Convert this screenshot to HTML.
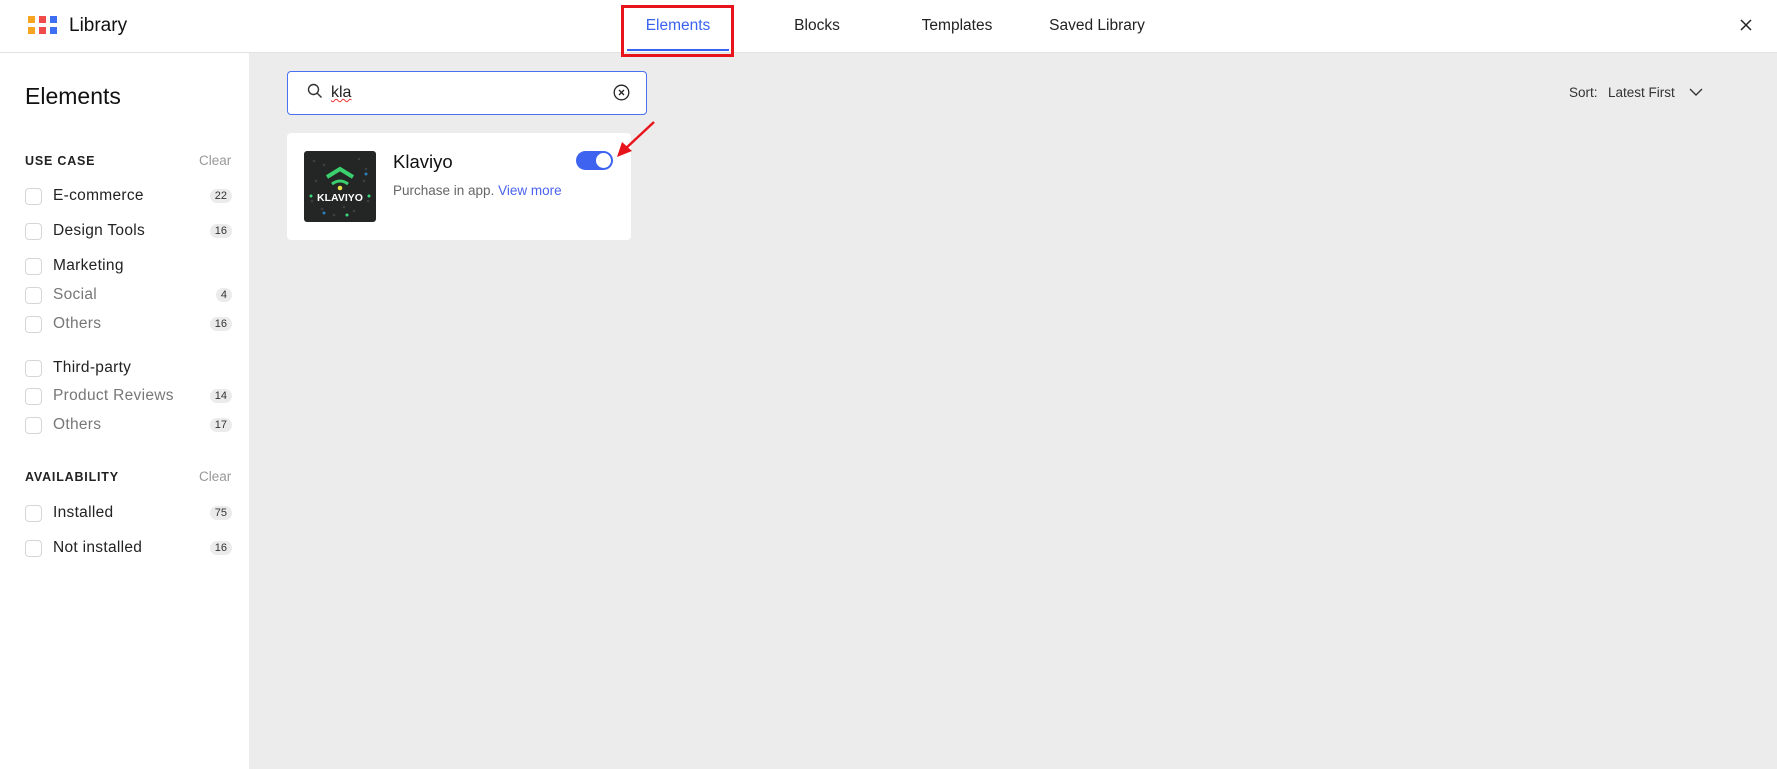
<!DOCTYPE html>
<html><head><meta charset="utf-8"><style>
*{box-sizing:border-box;margin:0;padding:0}
body{width:1777px;height:769px;overflow:hidden;background:#ececec;font-family:"Liberation Sans",sans-serif;position:relative;color:#1c1c1c}
.a{position:absolute;white-space:nowrap}
#hdr{position:absolute;left:0;top:0;width:1777px;height:53px;background:#fff;border-bottom:1px solid #e2e2e2}
#side{position:absolute;left:0;top:53px;width:249px;height:716px;background:#fff}
.tab{font-size:15.5px;color:#222;transform:translateX(-50%);top:17px}
.cb{position:absolute;left:25px;width:17px;height:17px;border:1px solid #d6d6d6;border-radius:4px;background:#fff}
.lbl{left:53px;font-size:15.5px;color:#222;letter-spacing:.3px}
.lbl.g{color:#777}
.bd{right:1545px;font-size:11px;background:#ebebeb;border-radius:7px;padding:1px 5px;color:#333}
.hd{left:25px;font-size:12.5px;font-weight:bold;letter-spacing:.8px;color:#222}
.clr{left:199px;font-size:13.5px;color:#999}
</style></head><body>
<div id="hdr"></div>
<div id="side"></div>
<svg class="a" style="left:28px;top:16px" width="30" height="20" viewBox="0 0 30 20">
<rect x="0" y="0" width="7" height="7" fill="#f7a520"/><rect x="11" y="0" width="7" height="7" fill="#ef4b4b"/><rect x="22" y="0" width="7" height="7" fill="#3e6ff2"/>
<rect x="0" y="11" width="7" height="7" fill="#f7a520"/><rect x="11" y="11" width="7" height="7" fill="#ef4b4b"/><rect x="22" y="11" width="7" height="7" fill="#3e6ff2"/></svg>
<div class="a" style="left:69px;top:15px;font-size:19px;color:#111">Library</div>
<div class="a tab" style="left:678px;color:#3a62f0">Elements</div>
<div class="a" style="left:627px;top:49px;width:102px;height:2px;background:#3a62f0"></div>
<div class="a" style="left:621px;top:5px;width:113px;height:52px;border:3px solid #e8141c"></div>
<div class="a tab" style="left:817px">Blocks</div>
<div class="a tab" style="left:957px">Templates</div>
<div class="a tab" style="left:1097px">Saved Library</div>
<svg class="a" style="left:1740px;top:19px" width="12" height="12" viewBox="0 0 12 12"><path d="M1 1L11 11M11 1L1 11" stroke="#222" stroke-width="1.5"/></svg>

<div class="a" style="left:25px;top:83px;font-size:23px;color:#111">Elements</div>
<div class="a hd" style="top:154px">USE CASE</div><div class="a clr" style="top:153px">Clear</div>
<div class="cb" style="top:188px"></div><div class="a lbl" style="top:187px">E-commerce</div><div class="a bd" style="top:189px">22</div>
<div class="cb" style="top:223px"></div><div class="a lbl" style="top:222px">Design Tools</div><div class="a bd" style="top:224px">16</div>
<div class="cb" style="top:258px"></div><div class="a lbl" style="top:257px">Marketing</div>
<div class="cb" style="top:287px"></div><div class="a lbl g" style="top:286px">Social</div><div class="a bd" style="top:288px">4</div>
<div class="cb" style="top:316px"></div><div class="a lbl g" style="top:315px">Others</div><div class="a bd" style="top:317px">16</div>
<div class="cb" style="top:360px"></div><div class="a lbl" style="top:359px">Third-party</div>
<div class="cb" style="top:388px"></div><div class="a lbl g" style="top:387px">Product Reviews</div><div class="a bd" style="top:389px">14</div>
<div class="cb" style="top:417px"></div><div class="a lbl g" style="top:416px">Others</div><div class="a bd" style="top:418px">17</div>
<div class="a hd" style="top:470px">AVAILABILITY</div><div class="a clr" style="top:469px">Clear</div>
<div class="cb" style="top:505px"></div><div class="a lbl" style="top:504px">Installed</div><div class="a bd" style="top:506px">75</div>
<div class="cb" style="top:540px"></div><div class="a lbl" style="top:539px">Not installed</div><div class="a bd" style="top:541px">16</div>

<div class="a" style="left:287px;top:71px;width:360px;height:44px;background:#fff;border:1.5px solid #4a70f0;border-radius:4px"></div>
<svg class="a" style="left:307px;top:83px" width="16" height="16" viewBox="0 0 16 16"><circle cx="6.5" cy="6.5" r="5" fill="none" stroke="#333" stroke-width="1.4"/><path d="M10 10L14.5 14.5" stroke="#333" stroke-width="1.4"/></svg>
<div class="a" style="left:331px;top:84px;font-size:16px;color:#222;text-decoration:underline wavy #e33;text-decoration-thickness:1px">kla</div>
<svg class="a" style="left:613px;top:84px" width="17" height="17" viewBox="0 0 17 17"><circle cx="8.5" cy="8.5" r="7.3" fill="none" stroke="#222" stroke-width="1.3"/><path d="M6 6L11 11M11 6L6 11" stroke="#222" stroke-width="1.3"/></svg>

<div class="a" style="left:1569px;top:85px;font-size:13.5px;color:#333">Sort:</div>
<div class="a" style="left:1608px;top:85px;font-size:13.5px;color:#333">Latest First</div>
<svg class="a" style="left:1689px;top:88px" width="14" height="9" viewBox="0 0 14 9"><path d="M1 1L7 7L13 1" fill="none" stroke="#333" stroke-width="1.4"/></svg>

<div class="a" style="left:287px;top:133px;width:344px;height:107px;background:#fff;border-radius:4px"></div>
<svg class="a" style="left:304px;top:151px" width="72" height="71" viewBox="0 0 72 71">
<rect width="72" height="71" rx="3" fill="#232624"/>
<g fill="#3a3f44"><circle cx="10" cy="10" r="1.3"/><circle cx="20" cy="14" r="1.3"/><circle cx="55" cy="8" r="1.3"/><circle cx="62" cy="18" r="1.3"/><circle cx="8" cy="50" r="1.3"/><circle cx="18" cy="58" r="1.3"/><circle cx="30" cy="64" r="1.3"/><circle cx="50" cy="60" r="1.3"/><circle cx="64" cy="50" r="1.3"/><circle cx="60" cy="30" r="1.3"/><circle cx="12" cy="30" r="1.3"/><circle cx="40" cy="56" r="1.3"/></g>
<circle cx="62" cy="23" r="1.5" fill="#2a7fb8"/><circle cx="20" cy="62" r="1.5" fill="#2a7fb8"/><circle cx="43" cy="64" r="1.5" fill="#3adc7c"/>
<path d="M23 26L36 18L49 26" fill="none" stroke="#3ccf6e" stroke-width="4"/>
<path d="M28 33Q36 27 44 33" fill="none" stroke="#3ccf6e" stroke-width="3"/>
<circle cx="36" cy="37" r="2.3" fill="#e8e04a"/>
<circle cx="7" cy="45" r="1.5" fill="#3adc7c"/><circle cx="65" cy="45" r="1.5" fill="#3adc7c"/>
<text x="36" y="50" font-family="Liberation Sans" font-weight="bold" font-size="10.5" fill="#fff" text-anchor="middle">KLAVIYO</text>
</svg>
<div class="a" style="left:393px;top:151px;font-size:18.5px;color:#111">Klaviyo</div>
<div class="a" style="left:393px;top:183px;font-size:13.5px;color:#666">Purchase in app. <span style="color:#4a62f0">View more</span></div>
<div class="a" style="left:576px;top:151px;width:37px;height:19px;border-radius:10px;background:#3d63f0"></div>
<div class="a" style="left:596px;top:153px;width:15px;height:15px;border-radius:50%;background:#fff"></div>
<svg class="a" style="left:614px;top:120px" width="42" height="42" viewBox="0 0 42 42"><path d="M40 2L10 30" stroke="#e8141c" stroke-width="2.4"/><path d="M3 37L8 22L18 31Z" fill="#e8141c"/></svg>
</body></html>
